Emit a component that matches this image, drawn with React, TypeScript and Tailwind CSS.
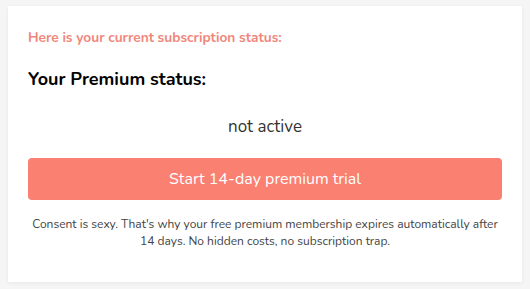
export default function App() {
  return (
    <div
      className="w-[530px] h-[289px] bg-[#f5f5f5] pt-[6px] px-[8px]"
      style={{ fontFamily: '"Nunito", "Lato", "Open Sans", sans-serif' }}
    >
      <div className="bg-white h-[276px] shadow-[0_1px_4px_rgba(0,0,0,0.06)] px-[20px] pt-[23px]">
        <p className="text-[13.7px] font-bold text-[#ef877c] leading-[18px]">
          Here is your current subscription status:
        </p>
        <h2 className="mt-[20px] text-[18px] font-bold text-black leading-[24px]">Your Premium status:</h2>
        <p className="mt-[25px] text-center text-[17px] text-[#333] leading-[22px]">not active</p>
        <button className="mt-[20px] w-full h-[42px] rounded-[4px] bg-[#fa8072] text-white text-[16px] leading-[20px]">
          Start 14-day premium trial
        </button>
        <p className="mt-[16px] text-center text-[12px] text-[#444] leading-[17px] px-[4px]">
          Consent is sexy. That's why your free premium membership expires automatically after 14 days. No hidden costs, no subscription trap.
        </p>
      </div>
    </div>
  );
}
